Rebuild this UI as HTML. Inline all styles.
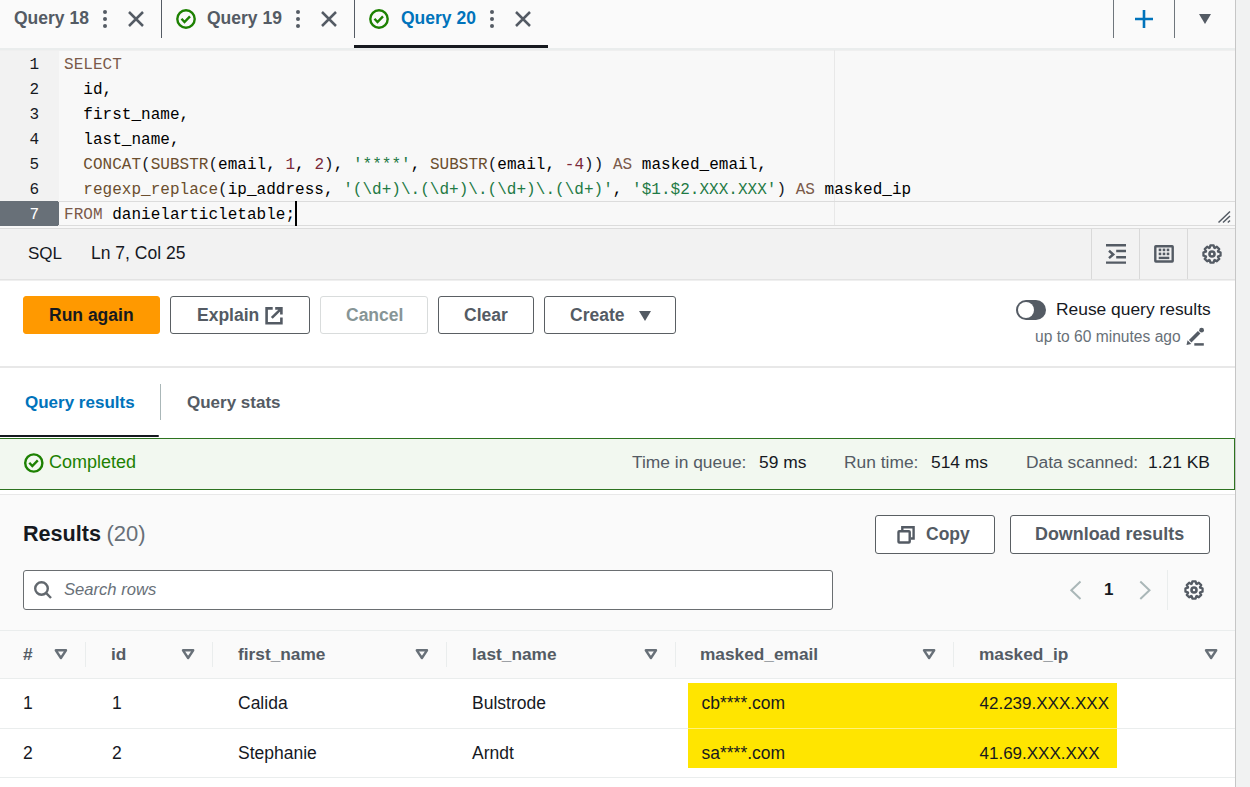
<!DOCTYPE html>
<html><head><meta charset="utf-8">
<style>
*{box-sizing:border-box;margin:0;padding:0}
html,body{width:1250px;height:787px;overflow:hidden;background:#fff;font-family:"Liberation Sans",sans-serif;color:#16191f}
.a{position:absolute}
.t{position:absolute;white-space:nowrap;line-height:1}
.b{font-weight:bold}
svg{position:absolute;overflow:visible}
/* tab bar */
#tabbar{left:0;top:0;width:1235px;height:48px;background:#fafafa}
#tabline{left:0;top:48px;width:1235px;height:2px;background:#eaeded}
.tabtxt{font-size:17.5px;font-weight:bold;color:#545b64;top:10px}
.vsep{position:absolute;width:1px;background:#545b64}
/* editor */
#gutter{left:0;top:51px;width:59px;height:175px;background:#f2f2f2}
#editor{left:59px;top:51px;width:1176px;height:175px;background:#f8f8f8}
.ln{position:absolute;left:0;width:39px;text-align:right;font-family:"Liberation Mono",monospace;font-size:16px;line-height:25px;color:#16191f}
.code{position:absolute;left:64px;font-family:"Liberation Mono",monospace;font-size:16px;line-height:25px;color:#000;white-space:pre;letter-spacing:0.025px}
.kw{color:#7b5a4a}
.fn{color:#6b4e2e}
.str{color:#1f7a45}
.num{color:#7a2a3a}
.pn{color:#16191f}
/* status bar */
#status{left:0;top:229px;width:1235px;height:50px;background:#f2f2f2}
/* buttons */
.btn{position:absolute;height:38px;border:1px solid #5a5f63;border-radius:3px;background:#fff}
.btxt{font-size:17.5px;font-weight:bold;color:#545b64}
</style></head>
<body>
<!-- right strip -->
<div class="a" style="left:1235px;top:0;width:15px;height:787px;background:#f1f2f2;border-left:1px solid #c6c6c6"></div>

<!-- TAB BAR -->
<div id="tabbar" class="a"></div>
<div id="tabline" class="a"></div>
<div class="a" style="left:0;top:50px;width:1235px;height:1px;background:#efefef"></div>
<span class="t tabtxt" style="left:14px">Query 18</span>
<div class="vsep" style="left:161px;top:0;height:38px"></div>
<span class="t tabtxt" style="left:207px">Query 19</span>
<div class="vsep" style="left:354px;top:0;height:38px"></div>
<span class="t tabtxt" style="left:401px;color:#0073bb">Query 20</span>
<div class="a" style="left:354px;top:45px;width:194px;height:3px;background:#16191f"></div>
<div class="vsep" style="left:1113px;top:0;height:38px;background:#6f767c"></div>
<div class="vsep" style="left:1174px;top:0;height:38px;background:#6f767c"></div>

<!-- EDITOR -->
<div id="gutter" class="a"></div>
<div id="editor" class="a"></div>
<div class="a" style="left:834px;top:50px;width:1px;height:176px;background:#e8e8e8"></div>
<div class="a" style="left:0;top:201px;width:59px;height:25px;background:#687078"></div>
<div class="a" style="left:58px;top:201px;width:1177px;height:1px;background:#dcdcdc"></div>
<div class="a" style="left:58px;top:225px;width:1177px;height:1px;background:#dcdcdc"></div>
<div class="a" style="left:0;top:226px;width:1235px;height:2px;background:#f8f8f8"></div>
<div class="a" style="left:0;top:228px;width:1235px;height:1px;background:#dcdcdc"></div>
<div class="a" style="left:0;top:52px;width:58px">
<div class="ln" style="top:1px">1</div>
<div class="ln" style="top:26px">2</div>
<div class="ln" style="top:51px">3</div>
<div class="ln" style="top:76px">4</div>
<div class="ln" style="top:101px">5</div>
<div class="ln" style="top:126px">6</div>
<div class="ln" style="top:151px;color:#fff">7</div>
</div>
<div class="a" style="left:0;top:53px">
<div class="code" style="top:0"><span class="kw">SELECT</span></div>
<div class="code" style="top:25px">  id,</div>
<div class="code" style="top:50px">  first_name,</div>
<div class="code" style="top:75px">  last_name,</div>
<div class="code" style="top:100px">  <span class="fn">CONCAT</span><span class="pn">(</span><span class="fn">SUBSTR</span><span class="pn">(</span>email, <span class="num">1</span>, <span class="num">2</span><span class="pn">)</span>, <span class="str">'****'</span>, <span class="fn">SUBSTR</span><span class="pn">(</span>email, <span class="num">-4</span><span class="pn">))</span> <span class="kw">AS</span> masked_email,</div>
<div class="code" style="top:125px">  <span class="fn">regexp_replace</span><span class="pn">(</span>ip_address, <span class="str">'(\d+)\.(\d+)\.(\d+)\.(\d+)'</span>, <span class="str">'$1.$2.XXX.XXX'</span><span class="pn">)</span> <span class="kw">AS</span> masked_ip</div>
<div class="code" style="top:150px"><span class="kw">FROM</span> danielarticletable;</div>
</div>
<div class="a" style="left:295px;top:201px;width:2px;height:25px;background:#000"></div>

<!-- STATUS BAR -->
<div id="status" class="a"></div>
<div class="a" style="left:0;top:279px;width:1235px;height:1px;background:#e3e3e3"></div>
<div class="a" style="left:0;top:280px;width:1235px;height:1px;background:#efefef"></div>
<span class="t" style="left:28px;top:245.4px;font-size:17px">SQL</span>
<span class="t" style="left:91px;top:245px;font-size:17.5px">Ln 7, Col 25</span>
<div class="a" style="left:1091px;top:229px;width:1px;height:50px;background:#d9d9d9"></div>
<div class="a" style="left:1139px;top:229px;width:1px;height:50px;background:#d9d9d9"></div>
<div class="a" style="left:1187px;top:229px;width:1px;height:50px;background:#d9d9d9"></div>

<!-- BUTTONS -->
<div class="btn" style="left:23px;top:296px;width:137px;background:#ff9900;border-color:#ff9900"></div>
<span class="t btxt" style="left:49px;top:306.5px;color:#16191f">Run again</span>
<div class="btn" style="left:170px;top:296px;width:140px"></div>
<span class="t btxt" style="left:197px;top:306.5px">Explain</span>
<div class="btn" style="left:320px;top:296px;width:108px;border-color:#d9dcdc"></div>
<span class="t btxt" style="left:346px;top:306.5px;color:#879596">Cancel</span>
<div class="btn" style="left:438px;top:296px;width:96px"></div>
<span class="t btxt" style="left:464px;top:306.5px">Clear</span>
<div class="btn" style="left:544px;top:296px;width:132px"></div>
<span class="t btxt" style="left:570px;top:306.5px">Create</span>

<span class="t" style="left:1056px;top:300.5px;font-size:17.4px">Reuse query results</span>
<span class="t" style="left:1035px;top:329px;font-size:15.6px;color:#687078">up to 60 minutes ago</span>
<div class="a" style="left:1016px;top:300px;width:30px;height:20px;border-radius:10px;background:#545b64"></div>
<div class="a" style="left:1018px;top:302px;width:16px;height:16px;border-radius:8px;background:#fff"></div>

<!-- RESULTS CONTAINER -->
<div class="a" style="left:0;top:366px;width:1235px;height:2px;background:#e8e8e8"></div>
<span class="t b" style="left:25px;top:394.4px;font-size:17px;color:#0073bb">Query results</span>
<span class="t b" style="left:187px;top:394.4px;font-size:17px;color:#545b64">Query stats</span>
<div class="a" style="left:160px;top:384px;width:1px;height:36px;background:#aab7b8"></div>
<div class="a" style="left:-2px;top:435px;width:161px;height:2px;border-radius:1px;background:#16191f"></div>

<div class="a" style="left:-1px;top:438px;width:1236px;height:52px;background:#f2f8f0;border:1px solid #2d731f"></div>
<span class="t" style="left:49px;top:453px;font-size:18px;color:#1d8102">Completed</span>
<span class="t" style="left:632px;top:453.5px;font-size:17.4px;color:#545b64">Time in queue:</span>
<span class="t" style="left:759px;top:453.5px;font-size:17.4px">59 ms</span>
<span class="t" style="left:844px;top:453.5px;font-size:17.4px;color:#545b64">Run time:</span>
<span class="t" style="left:931px;top:453.5px;font-size:17.4px">514 ms</span>
<span class="t" style="left:1026px;top:453.5px;font-size:17.4px;color:#545b64">Data scanned:</span>
<span class="t" style="left:1148px;top:453.5px;font-size:17.4px">1.21 KB</span>

<div class="a" style="left:0;top:490px;width:1235px;height:4px;background:#fff"></div>
<div class="a" style="left:0;top:494px;width:1235px;height:293px;background:#fafafa;border-top:1px solid #e8e8e8"></div>
<span class="t b" style="left:23px;top:522.5px;font-size:21.6px">Results</span>
<span class="t" style="left:106.5px;top:522.5px;font-size:22px;color:#687078">(20)</span>
<div class="btn" style="left:875px;top:515px;width:120px;height:39px"></div>
<span class="t btxt" style="left:926px;top:525.5px">Copy</span>
<div class="btn" style="left:1010px;top:515px;width:200px;height:39px"></div>
<span class="t btxt" style="left:1035px;top:525.5px;font-size:17.9px">Download results</span>

<div class="a" style="left:23px;top:570px;width:810px;height:40px;background:#fff;border:1px solid #6a6e71;border-radius:3px"></div>
<span class="t" style="left:64px;top:582px;font-size:16.6px;font-style:italic;color:#687078">Search rows</span>
<span class="t b" style="left:1104px;top:581px;font-size:17px">1</span>
<div class="a" style="left:1167px;top:570px;width:1px;height:40px;background:#eaeded"></div>

<!-- TABLE -->
<div class="a" style="left:0;top:630px;width:1235px;height:49px;background:#fafafa;border-top:1px solid #eaeded;border-bottom:1px solid #eaeded"></div>
<div class="a" style="left:0;top:679px;width:1235px;height:108px;background:#fff"></div>
<div class="a" style="left:0;top:728px;width:1235px;height:1px;background:#eaeded"></div>
<div class="a" style="left:0;top:777px;width:1235px;height:1px;background:#eaeded"></div>

<span class="t b" style="left:23px;top:646px;font-size:17.3px;color:#545b64">#</span>
<span class="t b" style="left:111px;top:646px;font-size:17.3px;color:#545b64">id</span>
<span class="t b" style="left:238px;top:646px;font-size:17.3px;color:#545b64">first_name</span>
<span class="t b" style="left:472px;top:646px;font-size:17.3px;color:#545b64">last_name</span>
<span class="t b" style="left:700px;top:646px;font-size:17.3px;color:#545b64">masked_email</span>
<span class="t b" style="left:979px;top:646px;font-size:17.3px;color:#545b64">masked_ip</span>
<div class="a" style="left:85px;top:642px;width:1px;height:25px;background:#eaeded"></div>
<div class="a" style="left:212px;top:642px;width:1px;height:25px;background:#eaeded"></div>
<div class="a" style="left:446px;top:642px;width:1px;height:25px;background:#eaeded"></div>
<div class="a" style="left:675px;top:642px;width:1px;height:25px;background:#eaeded"></div>
<div class="a" style="left:953px;top:642px;width:1px;height:25px;background:#eaeded"></div>

<div class="a" style="left:688px;top:683px;width:429px;height:85px;background:#ffe500"></div>
<div class="a" style="left:688px;top:728px;width:429px;height:1px;background:#fff27a"></div>

<span class="t" style="left:23px;top:694.5px;font-size:17.5px">1</span>
<span class="t" style="left:112px;top:694.5px;font-size:17.5px">1</span>
<span class="t" style="left:238px;top:694.5px;font-size:17.5px">Calida</span>
<span class="t" style="left:472px;top:694.5px;font-size:17.5px">Bulstrode</span>
<span class="t" style="left:701.5px;top:694.5px;font-size:17.5px">cb****.com</span>
<span class="t" style="left:979.5px;top:694.5px;font-size:17px">42.239.XXX.XXX</span>
<span class="t" style="left:23px;top:744.5px;font-size:17.5px">2</span>
<span class="t" style="left:112px;top:744.5px;font-size:17.5px">2</span>
<span class="t" style="left:238px;top:744.5px;font-size:17.5px">Stephanie</span>
<span class="t" style="left:472px;top:744.5px;font-size:17.5px">Arndt</span>
<span class="t" style="left:701.5px;top:744.5px;font-size:17.5px">sa****.com</span>
<span class="t" style="left:979.5px;top:744.5px;font-size:17px">41.69.XXX.XXX</span>


<svg width="1250" height="787" style="left:0;top:0" viewBox="0 0 1250 787">
<g fill="#545b64">
<circle cx="105" cy="12" r="2"/><circle cx="105" cy="19" r="2"/><circle cx="105" cy="26" r="2"/>
<circle cx="298" cy="12" r="2"/><circle cx="298" cy="19" r="2"/><circle cx="298" cy="26" r="2"/>
<circle cx="492" cy="12" r="2"/><circle cx="492" cy="19" r="2"/><circle cx="492" cy="26" r="2"/>
</g>
<g stroke="#545b64" stroke-width="2.5" fill="none">
<path d="M129 12L143 26M143 12L129 26"/>
<path d="M322 12L336 26M336 12L322 26"/>
<path d="M516 12L530 26M530 12L516 26"/>
</g>
<g stroke="#1d8102" stroke-width="2.4" fill="none">
<circle cx="186" cy="19" r="8.7"/><path d="M181.5 18.8L184.5 22L190 16.3"/>
<circle cx="379" cy="19" r="8.7"/><path d="M374.5 18.8L377.5 22L383 16.3"/>
</g>
<path d="M1135 19H1153M1144 10V28" stroke="#0073bb" stroke-width="2.6" fill="none"/>
<path d="M1199 14H1211L1205 24Z" fill="#545b64"/>

<g stroke="#545b64" fill="none" stroke-width="2.4">
<!-- indent icon -->
<path d="M1106 245.3H1126M1116.2 251H1126M1116.2 257.2H1126M1106 262.6H1126"/>
<path d="M1109 250.7L1113.2 254.4L1109 258.1" stroke-width="2.5"/>
<!-- keyboard -->
<rect x="1155.3" y="246.3" width="17.4" height="15.2" rx="0.5"/>
</g>
<g fill="#545b64">
<rect x="1158.7" y="248.6" width="2.6" height="2.6"/><rect x="1162.7" y="248.6" width="2.6" height="2.6"/><rect x="1166.7" y="248.6" width="2.6" height="2.6"/>
<rect x="1158.7" y="252.6" width="2.6" height="2.6"/><rect x="1162.7" y="252.6" width="2.6" height="2.6"/><rect x="1166.7" y="252.6" width="2.6" height="2.6"/>
<rect x="1158.7" y="256.7" width="10.6" height="2.4"/>
</g>
<g fill="none" stroke="#545b64" stroke-width="2.3" stroke-linejoin="round">
<path d="M1210.34 245.46L1213.66 245.46L1214.26 247.80L1214.79 248.02L1216.86 246.79L1219.21 249.14L1217.98 251.21L1218.20 251.74L1220.54 252.34L1220.54 255.66L1218.20 256.26L1217.98 256.79L1219.21 258.86L1216.86 261.21L1214.79 259.98L1214.26 260.20L1213.66 262.54L1210.34 262.54L1209.74 260.20L1209.21 259.98L1207.14 261.21L1204.79 258.86L1206.02 256.79L1205.80 256.26L1203.46 255.66L1203.46 252.34L1205.80 251.74L1206.02 251.21L1204.79 249.14L1207.14 246.79L1209.21 248.02L1209.74 247.80Z"/><circle cx="1212" cy="254" r="2.5" stroke-width="2.6"/>
<path d="M1192.34 581.46L1195.66 581.46L1196.26 583.80L1196.79 584.02L1198.86 582.79L1201.21 585.14L1199.98 587.21L1200.20 587.74L1202.54 588.34L1202.54 591.66L1200.20 592.26L1199.98 592.79L1201.21 594.86L1198.86 597.21L1196.79 595.98L1196.26 596.20L1195.66 598.54L1192.34 598.54L1191.74 596.20L1191.21 595.98L1189.14 597.21L1186.79 594.86L1188.02 592.79L1187.80 592.26L1185.46 591.66L1185.46 588.34L1187.80 587.74L1188.02 587.21L1186.79 585.14L1189.14 582.79L1191.21 584.02L1191.74 583.80Z"/><circle cx="1194" cy="590" r="2.5" stroke-width="2.6"/>
</g>
<!-- resize handle -->
<path d="M1218.5 222.5L1230 211.5M1223 222.5L1230 216M1227.8 222.5L1230 220.5" stroke="#545b64" stroke-width="1.5" fill="none"/>
<!-- external link -->
<g stroke="#545b64" stroke-width="2.6" fill="none">
<path d="M272.7 308.4H266.6V323.3H281.4V317.4"/>
<path d="M271.8 317.9L281.5 308.3M275.2 308.4H281.4V314.5"/>
</g>
<!-- create triangle -->
<path d="M639 311H651L645 321Z" fill="#545b64"/>
<!-- pencil -->
<g fill="#545b64">
<path d="M1186.5 345L1187.6 340.2L1191.3 343.9Z"/>
</g>
<path d="M1190.2 341.3L1199.2 332.3" stroke="#545b64" stroke-width="3.5" fill="none"/><circle cx="1201.6" cy="330.2" r="2.4" fill="#545b64"/>
<path d="M1194.3 344.4H1203.8" stroke="#545b64" stroke-width="2.5" fill="none"/>
<!-- search -->
<g stroke="#62686e" stroke-width="2.4" fill="none">
<circle cx="41.5" cy="588.5" r="6.3"/><path d="M46.2 593.2L51 598"/>
</g>
<!-- copy icon -->
<g stroke="#545b64" stroke-width="2.4" fill="none">
<path d="M902.3 530V527.3H913.6V538.5H910.8"/>
<rect x="898.5" y="531.3" width="11.2" height="11.2" rx="0.8"/>
</g>
<!-- pagination chevrons -->
<g stroke="#aab7b8" stroke-width="2" fill="none">
<path d="M1080.5 581.5L1071.3 590.2L1080.5 599"/>
<path d="M1140.3 581.5L1149.5 590.2L1140.3 599"/>
</g>
<!-- sort triangles -->
<g stroke="#687078" stroke-width="2.4" fill="none" stroke-linejoin="round">
<path d="M55.8 650.3H66L60.9 658Z"/>
<path d="M183 650.3H193.2L188.1 658Z"/>
<path d="M416.8 650.3H427L421.9 658Z"/>
<path d="M645.8 650.3H656L650.9 658Z"/>
<path d="M924 650.3H934.2L929.1 658Z"/>
<path d="M1206 650.3H1216.2L1211.1 658Z"/>
</g>
<!-- completed check -->
<g stroke="#1d8102" stroke-width="2.4" fill="none">
<circle cx="33.8" cy="463" r="8.6"/><path d="M29.3 462.8L32.3 466L37.8 460.3"/>
</g>
</svg>
</body></html>
